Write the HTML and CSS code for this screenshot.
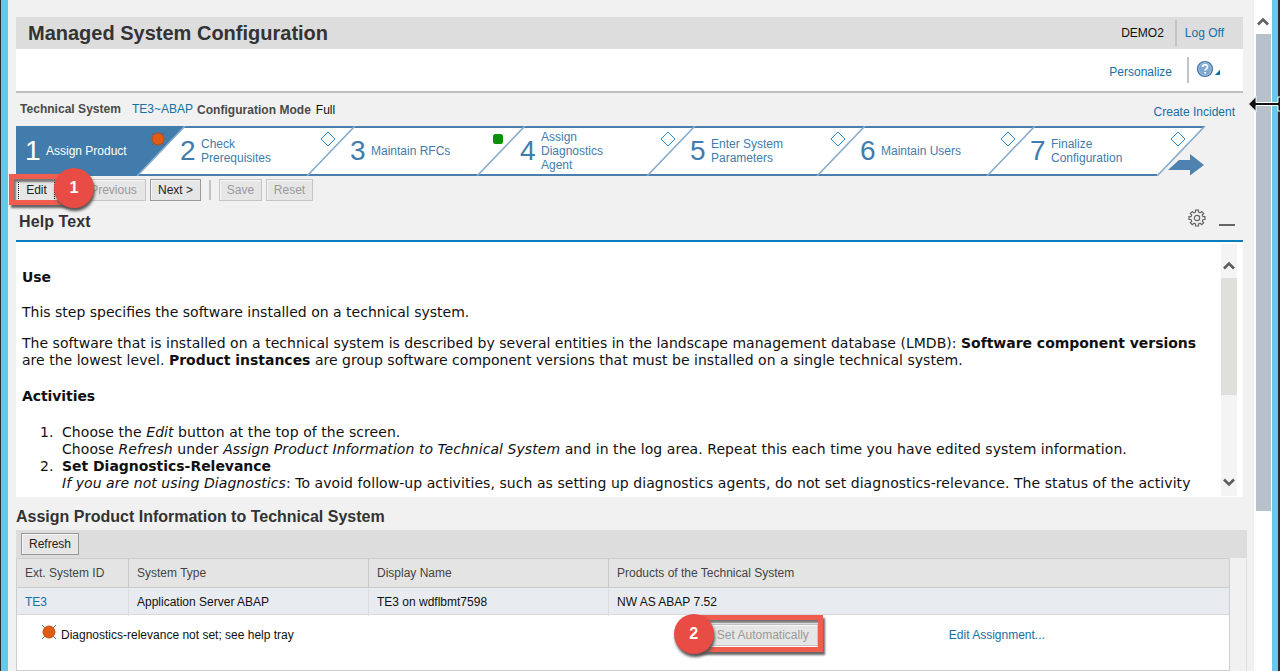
FILE: index.html
```html
<!DOCTYPE html>
<html lang="en">
<head>
<meta charset="utf-8">
<title>Managed System Configuration</title>
<link rel="stylesheet" href="styles.css">
</head>
<body>
<div class="window">
  <main class="page">
    <header class="titlebar">
      <h1>Managed System Configuration</h1>
      <span class="user">DEMO2</span><a class="logoff">Log Off</a>
    </header>
    <div class="toolbar">
      <a class="personalize">Personalize</a>
      <span class="help">
        <svg width="26" height="20" viewBox="0 0 26 20"><circle cx="9" cy="9" r="7.5" fill="#7da9cf" stroke="#3c6f9f" stroke-width="1.2"/><circle cx="9" cy="9" r="6.4" fill="none" stroke="#a9c6df" stroke-width=".7"/><path d="M6.6 7.1C6.6 3.8 11.7 4 11.5 7c-.1 1.6-2.4 1.9-2.4 3.6M9.1 12v1.6" fill="none" stroke="#fff" stroke-width="1.8"/><path d="M24 9.8V15h-5z" fill="#0b6cab"/></svg>
      </span>
    </div>
    <div class="info">
      <b>Technical System</b><a class="sysname">TE3~ABAP</a><b class="low mode">Configuration Mode</b><span class="low full">Full</span>
      <a class="incident">Create Incident</a>
    </div>
    <nav class="wizard">
      <svg class="road" width="1190" height="50" viewBox="0 0 1190 50">
        <path d="M0 0H1189L1141 50H0z" fill="#fff"/>
        <path d="M0 1H1188M0 49H1141" stroke="#4a7fb0" stroke-width="2"/>
        <path d="M0 0H169L121 50H0z" fill="#427cac"/>
        <g stroke="#86abcb" stroke-width="1.6"><path d="M339 0L291 50M509 0L461 50M679 0L631 50M849 0L801 50M1019 0L971 50M1189 0L1141 50M169 0L121 50"/></g>
        <path d="M1152 44L1163 34H1174V28L1188 39L1174 49.500V44z" fill="#4f82b0"/>
        <path d="M135.500 6.500l13 13M148.500 6.500l-13 13" stroke="#71525a"/>
        <circle cx="142" cy="13" r="6" fill="#df5c17" stroke="#b94a16"/>
        <rect x="477" y="8" width="10" height="10" rx="2.500" fill="#079107"/>
        <g fill="#fff" stroke="#258bca"><path d="M312 6l7 7-7 7-7-7zM652 6l7 7-7 7-7-7zM822 6l7 7-7 7-7-7zM992 6l7 7-7 7-7-7zM1162 6l7 7-7 7-7-7z"/></g>
      </svg>
      <div class="step current"><span class="num">1</span><span class="label">Assign Product</span></div>
      <div class="step"><span class="num">2</span><span class="label">Check<br>Prerequisites</span></div>
      <div class="step"><span class="num">3</span><span class="label">Maintain RFCs</span></div>
      <div class="step"><span class="num">4</span><span class="label">Assign<br>Diagnostics<br>Agent</span></div>
      <div class="step"><span class="num">5</span><span class="label">Enter System<br>Parameters</span></div>
      <div class="step"><span class="num">6</span><span class="label">Maintain Users</span></div>
      <div class="step"><span class="num">7</span><span class="label">Finalize<br>Configuration</span></div>
    </nav>
    <div class="actions">
      <span class="btn edit">Edit<span class="frame frame-edit"></span><span class="badge badge-edit">1</span></span>
      <span class="btn off previous">Previous</span>
      <span class="btn next">Next &gt;</span>
      <span class="sep"></span>
      <span class="btn off save">Save</span>
      <span class="btn off reset">Reset</span>
    </div>
    <div class="trayhead">
      <h2>Help Text</h2>
      <svg class="gear" width="18" height="18" viewBox="0 0 18 18" fill="none" stroke="#666" stroke-width="1.200"><circle cx="9" cy="9" r="2.700"/><path d="M7.500 1.200h3v2l1.700.7 1.500-1.400 2 2-1.400 1.600.7 1.600h2v2.800h-2l-.7 1.600 1.400 1.600-2 2-1.500-1.400-1.700.7v2h-3v-2l-1.600-.7-1.600 1.400-2-2 1.400-1.600-.7-1.600h-2V7.700h2l.7-1.600-1.400-1.600 2-2 1.600 1.400 1.600-.7z"/></svg>
      <span class="minimize"></span>
    </div>
    <section class="helptext">
      <div class="doc">
        <h3>Use</h3>
        <p class="p1">This step specifies the software installed on a technical system.</p>
        <p class="p2">The software that is installed on a technical system is described by several entities in the landscape management database (LMDB): <b>Software component versions</b><br>are the lowest level. <b>Product instances</b> are group software component versions that must be installed on a single technical system.</p>
        <h3 class="h-act">Activities</h3>
        <ol>
          <li>Choose the <i>Edit</i> button at the top of the screen.<br>Choose <i>Refresh</i> under <i>Assign Product Information to Technical System</i> and in the log area. Repeat this each time you have edited system information.</li>
          <li><b>Set Diagnostics-Relevance</b><br><i>If you are not using Diagnostics</i>: To avoid follow-up activities, such as setting up diagnostics agents, do not set diagnostics-relevance. The status of the activity</li>
        </ol>
      </div>
      <div class="docscroll">
        <svg width="16" height="32" viewBox="0 0 16 32"><path d="M3 24.500L8 19.500L13 24.500" fill="none" stroke="#5c5c5c" stroke-width="2.600"/></svg>
        <span class="docthumb"></span>
        <svg class="down" width="16" height="28" viewBox="0 0 16 28"><path d="M3 11.500L8 16.500L13 11.500" fill="none" stroke="#5c5c5c" stroke-width="2.600"/></svg>
      </div>
    </section>
    <h2 class="assign">Assign Product Information to Technical System</h2>
    <section class="tray">
      <div class="tabletools"><span class="btn refresh">Refresh</span></div>
      <div class="table">
        <div class="row head"><span>Ext. System ID</span><span>System Type</span><span>Display Name</span><span>Products of the Technical System</span></div>
        <div class="row"><span><a>TE3</a></span><span>Application Server ABAP</span><span>TE3 on wdflbmt7598</span><span>NW AS ABAP 7.52</span></div>
        <div class="detail">
          <svg class="status" width="16" height="16" viewBox="0 0 16 16"><path d="M1 1l14 14M15 1L1 15" stroke="#777"/><circle cx="8" cy="8" r="6" fill="#df5c17" stroke="#c94d12"/></svg>
          <span class="message">Diagnostics-relevance not set; see help tray</span>
          <span class="btn off auto">Set Automatically<span class="frame frame-auto"></span><span class="badge badge-auto">2</span></span>
          <a class="editassign">Edit Assignment...</a>
        </div>
      </div>
    </section>
  </main>
  <aside class="scrollbar">
    <svg width="18" height="34" viewBox="0 0 18 34"><path d="M4 24.500L9 19.500L14 24.500" fill="none" stroke="#606060" stroke-width="2.600"/></svg>
    <span class="thumb"></span>
  </aside>
  <svg class="cursor" width="32" height="18" viewBox="0 0 32 18"><path d="M.5 9L8 1.500V7.500H30V2H34V16H30V10.500H8V16.500z" fill="#111" stroke="#fff" stroke-width="1"/></svg>
</div>
</body>
</html>
```
FILE: styles.css
```css
*, *::before, *::after { box-sizing: border-box; }
body { margin: 0; font-family: "Liberation Sans", Arial, sans-serif; font-size: 12px; line-height: 14px; color: #111; }
svg { display: block; }
h1, h2, h3, p, ol { margin: 0; }
a { color: #1470a6; }
.window { position: relative; width: 1280px; height: 671px; overflow: hidden; display: flex; background: #f1f1f1; }
.window::before, .window::after { content: ""; width: 8px; flex: none; background: #66c9ea; }
.window::before { border-left: 1px solid #2d2d33; }
.window::after { border-right: 2px solid #252a30; }
.page { width: 1246px; flex: none; padding: 17px 0 0 8px; }
.titlebar { display: flex; align-items: center; width: 1227px; height: 32px; background: #ddd; padding: 0 19px 0 12px; }
h1 { font-size: 20px; line-height: 24px; color: #333; flex: 1; }
.user { padding-right: 11px; }
.logoff { border-left: 2px solid #c3c3c3; padding: 6px 0 6px 8px; }
.toolbar { display: flex; justify-content: flex-end; width: 1227px; height: 44px; background: #fff; border-bottom: 2px solid #bfbfbf; padding-right: 21px; }
.personalize { padding: 16px 15px 0 0; }
.help { margin-top: 8px; height: 26px; border-left: 2px solid #c3c3c3; padding: 3px 0 0 7px; }
.info { display: flex; width: 1227px; height: 33px; padding: 9px 8px 0 4px; color: #333; }
.info b { color: #4a4a4a; letter-spacing: .03px; }
.sysname { margin-left: 11px; }
.low { padding-top: 1px; }
.mode { margin-left: 4px; }
.full { margin-left: 5px; color: #111; }
.incident { margin-left: auto; padding-top: 3px; }
.wizard { position: relative; display: flex; height: 50px; }
.road { position: absolute; left: 0; top: 0; }
.step { position: relative; width: 170px; flex: none; display: flex; align-items: center; padding-left: 9px; color: #427cac; }
.step + .step { padding-left: 8px; }
.step:not(.current) { left: -14px; }
.step.current { color: #fff; }
.num { font-size: 28px; line-height: 50px; width: 21px; padding-right: 5px; }
.actions { display: flex; height: 25px; padding-top: 3px; align-items: flex-start; }
.btn { display: block; height: 22px; line-height: 20px; text-align: center; border: 1px solid #999; box-shadow: inset 1px 1px #f6f6f6; background: #e6e6e6; color: #222; white-space: nowrap; flex: none; }
.off { color: #9a9a9a; border-color: #c5c5c5; }
.edit { position: relative; width: 37px; margin-left: 2px; border: 1px dotted #111; }
.previous { width: 65px; margin-left: 26px; }
.next { width: 51px; margin-left: 4px; }
.sep { width: 2px; height: 20px; margin: 1px 8px 0; background: #c3c3c3; }
.save { width: 43px; }
.reset { width: 47px; margin-left: 4px; }
.trayhead { display: flex; width: 1227px; height: 41px; border-bottom: 2px solid #087ebd; padding: 11px 8px 0 3px; }
h2 { font-size: 16px; line-height: 20px; color: #333; }
.trayhead h2 { letter-spacing: .1px; }
.gear { margin: -3px 13px 0 auto; }
.minimize { width: 16px; height: 2px; background: #666; margin-top: 12px; }
.helptext { display: flex; width: 1227px; height: 255px; overflow: hidden; background: #fff; font-family: Verdana, "DejaVu Sans", sans-serif; font-size: 14px; line-height: 17px; }
.doc { width: 1205px; padding: 27px 0 0 6px; flex: none; white-space: nowrap; }
.doc h3 { font-size: 14px; line-height: 17px; letter-spacing: -.08px; }
.p1 { margin-top: 18px; }
.p2 { margin-top: 14px; letter-spacing: .022px; }
.doc .h-act { margin-top: 19px; }
ol { margin-top: 19px; padding-left: 40px; list-style: none; counter-reset: item; }
li { counter-increment: item; letter-spacing: .06px; }
li::before { content: counter(item) "."; display: inline-block; width: 22px; margin-left: -22px; }
.doc b { letter-spacing: -.03px; }
.docscroll { width: 16px; background: #f4f4f4; margin: 2px 0 0; height: 252px; display: flex; flex-direction: column; }
.docthumb { height: 117px; background: #dfdfdc; margin-top: 2px; }
.down { margin-top: auto; }
.assign { height: 33px; padding-top: 10px; }
.tray { width: 1231px; border-right: 1px solid #ddd; height: 141px; }
.tabletools { background: #ddd; height: 28px; padding: 3px 5px; }
.refresh { width: 58px; }
.table { width: 1214px; border: 1px solid #cecece; height: 113px; background: #fff; }
.row { display: grid; grid-template-columns: 111px 240px 240px 1fr; height: 27px; background: #e8ecf0; border-bottom: 1px solid #d7d9db; line-height: 28px; }
.row span { padding-left: 8px; border-left: 1px solid #ddd; }
.row span:first-child { border-left: 0; }
.row.head { height: 29px; line-height: 29px; background: #e4e4e4; color: #444; border-bottom-color: #ccc; }
.row.head span { border-color: #c9c9c9; }
.detail { display: flex; height: 55px; padding: 9px 0 0 24px; }
.message { margin: 4px 0 0 4px; }
.auto { position: relative; width: 110px; margin-left: 414px; }
.editassign { margin: 4px 0 0 131px; }
.frame { position: absolute; border: 5px solid #f05c4e; box-shadow: 2px 3px 2px #666, inset 2px 3px 2px #777; }
.frame-edit { left: -10px; top: -6px; width: 65px; height: 31px; }
.frame-auto { left: -17px; top: -10px; width: 131px; height: 37px; }
.badge { position: absolute; width: 40px; height: 40px; border-radius: 50%; background: #e94b45; color: #fff; font: bold 16px/40px "Liberation Sans", Arial, sans-serif; text-align: center; box-shadow: 1px 3px 3px #555; }
.badge-edit { left: 35px; top: -12px; }
.badge-auto { left: -35px; top: -11px; }
.scrollbar { width: 18px; flex: none; background: #fff; display: flex; flex-direction: column; padding: 0 1px 0 2px; }
.scrollbar svg { margin-left: -2px; }
.thumb { height: 477px; background: #b7c1cc; }
.cursor { position: absolute; left: 1248px; top: 95px; }
```
